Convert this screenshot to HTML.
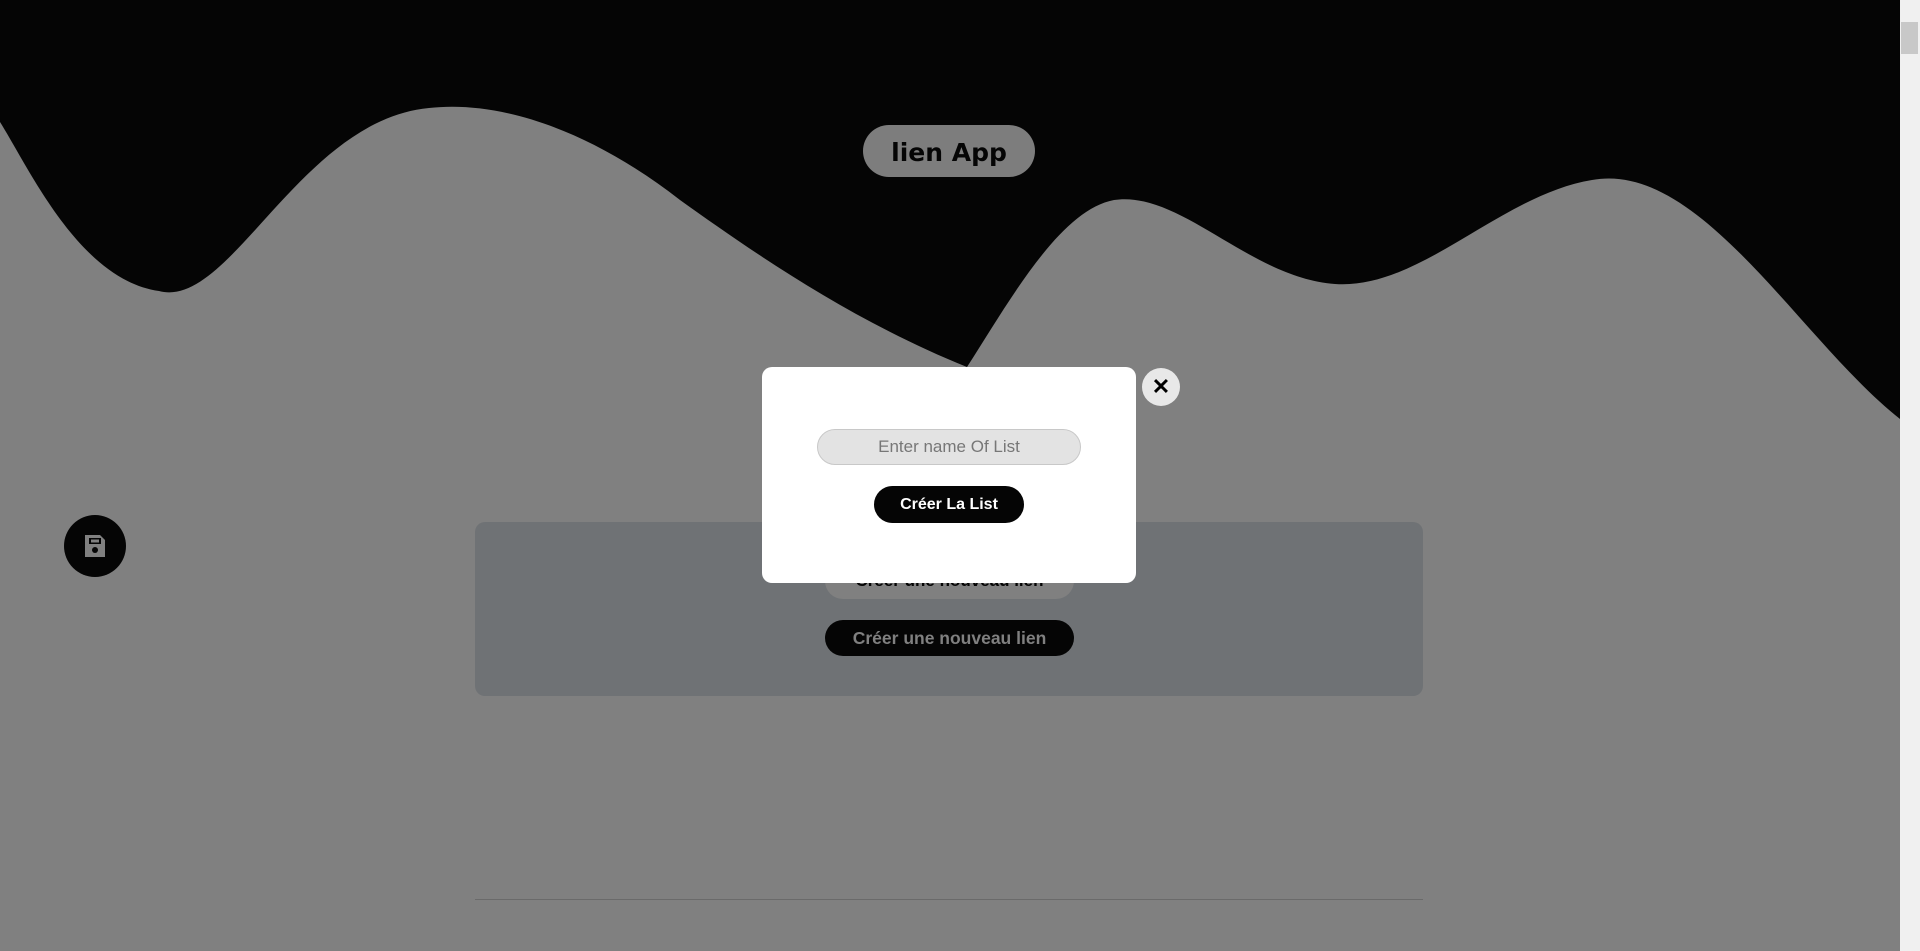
<!DOCTYPE html>
<html><head><meta charset="utf-8"><style>
html,body{margin:0;padding:0;width:1920px;height:951px;overflow:hidden;background:#808080;font-family:"Liberation Sans",sans-serif}
.abs{position:absolute}
</style></head><body>
<svg class="abs" style="left:0;top:0" width="1900" height="951">
<rect width="1900" height="951" fill="#808080"/>
<path d="M0 0 H1900 V419 C1800 340 1700 160 1592 180 C1500 195 1420 290 1335 284 C1250 278 1180 190 1114 200 C1060 210 1010 300 967 367 C850 320 750 250 680 200 C590 130 500 100 429 108 C300 120 230 310 159 291 C80 280 30 170 0 122 Z" fill="#050505"/>
</svg>
<div class="abs" style="left:863px;top:125px;width:172px;height:52px;border-radius:26px;background:#7d7d7d;text-align:center;line-height:56px;font-family:'Comic Sans MS','DejaVu Sans',sans-serif;font-size:25px;font-weight:bold;color:#050505">lien App</div>
<div class="abs" style="left:64px;top:515px;width:62px;height:62px;border-radius:50%;background:#050505"></div>
<svg class="abs" style="left:83px;top:533px" width="24" height="26" viewBox="0 0 24 26"><path d="M2 2 H17 L22 7 V24 H2 Z" fill="#808080"/><rect x="6" y="5" width="12" height="6" fill="#050505"/><rect x="8" y="6.5" width="8" height="3" fill="#808080"/><circle cx="12" cy="17" r="3" fill="#050505"/></svg>
<div class="abs" style="left:475px;top:522px;width:948px;height:174px;border-radius:10px;background:#6f7275"></div>
<div class="abs" style="left:825px;top:563px;width:249px;height:36px;border-radius:18px;background:#808080;color:#050505;font-weight:bold;font-size:17px;text-align:center;line-height:36px">Créer une nouveau lien</div>
<div class="abs" style="left:825px;top:620px;width:249px;height:36px;border-radius:18px;background:#050505;color:#808080;font-weight:bold;font-size:17.5px;text-align:center;line-height:36px">Créer une nouveau lien</div>
<div class="abs" style="left:475px;top:899px;width:948px;height:1px;background:#6a6a6a"></div>
<div class="abs" style="left:762px;top:367px;width:374px;height:216px;border-radius:10px;background:#fff"></div>
<div class="abs" style="left:817px;top:429px;width:262px;height:34px;border-radius:18px;background:#e3e3e3;border:1px solid #c8c8c8;color:#777;font-size:17px;text-align:center;line-height:34px">Enter name Of List</div>
<div class="abs" style="left:874px;top:486px;width:150px;height:37px;border-radius:19px;background:#050505;color:#fff;font-weight:bold;font-size:16px;text-align:center;line-height:37px">Créer La List</div>
<div class="abs" style="left:1142px;top:368px;width:38px;height:38px;border-radius:50%;background:#e8e8e8;text-align:center;line-height:38px;font-size:22px;font-weight:bold;color:#000">✕</div>
<div class="abs" style="left:1900px;top:0;width:20px;height:951px;background:#f0f0f0"></div>
<div class="abs" style="left:1901px;top:22px;width:17px;height:32px;background:#c8c8c8"></div>
</body></html>
